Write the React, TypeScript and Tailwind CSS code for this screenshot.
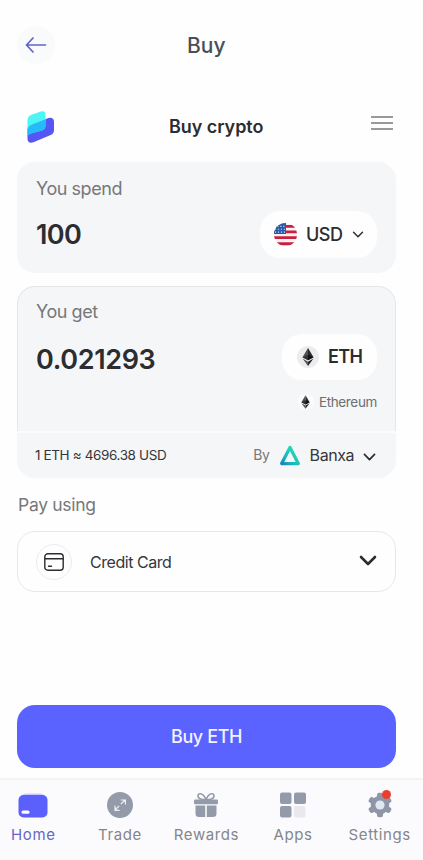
import type { ReactNode } from 'react';

function Chevron({ className, strokeWidth = 1.5 }: { className: string; strokeWidth?: number }) {
  return (
    <svg viewBox="0 0 18 11" className={className} fill="none" stroke="currentColor" strokeWidth={strokeWidth} strokeLinecap="round" strokeLinejoin="round">
      <path d="M2 2l7 7 7-7" />
    </svg>
  );
}

function Logo() {
  return (
    <svg viewBox="0 0 28 32" className="mb-px h-8 w-7">
      <path d="M5 13.500L21.500 7c3-1 5.500.5 5.500 3.500v8.500c0 2.500-1 4-3.300 5L6.500 31.200C3 32.500.5 31 .5 28v-8.500c0-3 1.500-5 4.500-6z" fill="#5656f5" />
      <path d="M5 3.500L14 .6c2.700-.8 4.500.4 4.500 3v10.900c0 2.500-1 4-3.500 4.900L4 22.500c-2 .6-3.500 1.500-3.500 3.500V9.500c0-3 1.500-5 4.500-6z" fill="#4df5f5" />
      <path d="M5 13.500L18.500 8.200v6.300c0 2.500-1 4-3.500 4.900L4 22.500c-2 .6-3.500 1.500-3.500 3.500v-6.500c0-3 1.500-5 4.500-6z" fill="#27baf8" />
    </svg>
  );
}

function Flag() {
  return (
    <svg viewBox="0 0 24 24" className="size-[23px]">
      <defs>
        <clipPath id="flag">
          <circle cx="12" cy="12" r="12" />
        </clipPath>
      </defs>
      <g clipPath="url(#flag)">
        <rect width="24" height="24" fill="#f4f2f5" />
        <path d="M0 3.500h24M0 9.300h24M0 15.300h24M0 21.700h24" stroke="#c9203f" strokeWidth="3" />
        <rect width="12.500" height="11.500" fill="#275ba8" />
        <path d="M3.500 3.500h9M1 6.500h12M1 9.500h12" stroke="#c9dcf5" strokeWidth="1.200" strokeDasharray="1.200 1.900" />
      </g>
    </svg>
  );
}

function Eth({ className }: { className: string }) {
  return (
    <svg viewBox="0 0 12 18" className={className}>
      <path d="M6 0L.5 9.200 6 12.300z" fill="#515154" />
      <path d="M6 0l5.500 9.200L6 12.300z" fill="#29292b" />
      <path d="M.5 9.200L6 6.800v5.500z" fill="#333336" />
      <path d="M11.500 9.200L6 6.800v5.500z" fill="#111113" />
      <path d="M.5 10.500L6 18v-4.300z" fill="#57575a" />
      <path d="M11.500 10.500L6 18v-4.300z" fill="#242426" />
    </svg>
  );
}

function Banxa() {
  return (
    <svg viewBox="0 0 22 21" className="mb-px h-[21px] w-[22px]" fill="none">
      <defs>
        <linearGradient id="banxa" x1="1" y1="20" x2="14" y2="7" gradientUnits="userSpaceOnUse">
          <stop stopColor="#1479bd" />
          <stop offset=".5" stopColor="#19b4c0" />
          <stop offset="1" stopColor="#20d5b5" />
        </linearGradient>
      </defs>
      <path d="M11 2.500L2.700 18.600h16.600z" stroke="url(#banxa)" strokeWidth="3.300" strokeLinejoin="round" />
    </svg>
  );
}

function HomeIcon() {
  return (
    <svg viewBox="0 0 30 26" className="h-[26px] w-[30px]">
      <path d="M4 3.500Q5 1.500 8 1.500h14q3 0 4 2z" fill="#c9caff" />
      <rect x=".5" y="3" width="29" height="22.500" rx="5" fill="#5b5ffc" />
      <rect x="3.500" y="18.500" width="8" height="3.300" rx="1.500" fill="#fff" />
    </svg>
  );
}

function TradeIcon() {
  return (
    <svg viewBox="0 0 26 26" className="size-[26px]" fill="none">
      <circle cx="13" cy="13" r="13" fill="#939baa" />
      <path d="M13.800 12.200L18 8m-4.200 0H18.400v4.600M12.200 13.800L8 18m0-4.600V18.400h4.600" stroke="#eef0f4" strokeWidth="1.200" />
    </svg>
  );
}

function RewardsIcon() {
  return (
    <svg viewBox="0 0 24 26" className="h-[26px] w-6">
      <path d="M12 7.500C8.500 8 4 7 4 4s4.500-4 8 3.500C15.500 0 20 1 20 4s-4.500 4-8 3.500z" fill="none" stroke="#939baa" strokeWidth="1.600" />
      <rect x="0" y="7.500" width="24" height="4.700" rx="1.200" fill="#939baa" />
      <path d="M1.500 13.500h9.700V25H5q-3.500 0-3.500-3.500zM12.800 13.500h9.700v8q0 3.500-3.500 3.500h-6.200z" fill="#939baa" />
    </svg>
  );
}

function AppsIcon() {
  return (
    <svg viewBox="0 0 26 26" className="size-[26px]" fill="#939baa">
      <rect x="0" y=".5" width="11.500" height="11.500" rx="2" />
      <rect x="14" y=".5" width="12" height="11.500" rx="2" />
      <rect x="0" y="14" width="11.500" height="11.500" rx="2" />
      <rect x="14" y="14" width="11.500" height="11.500" rx="2" fill="#e9e9ed" />
    </svg>
  );
}

function SettingsIcon() {
  return (
    <div className="relative">
      <svg viewBox="0 0 24 26" className="h-[26px] w-6">
        <g fill="#8f96a7">
          <circle cx="12" cy="13" r="9.300" />
          <rect x="9" y=".8" width="6" height="24.400" rx="2" />
          <rect x="9" y=".8" width="6" height="24.400" rx="2" transform="rotate(60 12 13)" />
          <rect x="9" y=".8" width="6" height="24.400" rx="2" transform="rotate(120 12 13)" />
        </g>
        <circle cx="12" cy="13" r="4.600" fill="#dfe7f3" />
      </svg>
      <span className="absolute -top-[2px] left-[14px] size-[9px] rounded-full bg-[#e8402f]"></span>
    </div>
  );
}

const tabs: { label: string; icon: ReactNode; active?: boolean }[] = [
  { label: 'Home', icon: <HomeIcon />, active: true },
  { label: 'Trade', icon: <TradeIcon /> },
  { label: 'Rewards', icon: <RewardsIcon /> },
  { label: 'Apps', icon: <AppsIcon /> },
  { label: 'Settings', icon: <SettingsIcon /> },
];

export default function App() {
  return (
    <div className="flex h-[860px] w-[423px] flex-col overflow-hidden bg-[#fefefe] font-['Inter',sans-serif] text-[#2c2d30]">
      <header className="flex h-[92px] items-center pl-[17px]">
        <button className="mb-[3px] flex size-[38px] items-center justify-center rounded-full bg-[#f9fafc] text-[#6262cf]">
          <svg viewBox="0 0 22 16" className="h-4 w-[22px]" fill="none" stroke="currentColor" strokeWidth="1.700" strokeLinecap="round" strokeLinejoin="round">
            <path d="M20.500 8H1.500M8 1L1.500 8 8 15" />
          </svg>
        </button>
        <h1 className="ml-[132px] text-[21px] leading-6 font-medium text-[#465059]">Buy</h1>
      </header>

      <main className="flex flex-col pr-[27px] pl-[17px]">
        <div className="flex h-[70px] items-center pl-[10px]">
          <Logo />
          <h2 className="ml-[114px] text-[18px] leading-6 font-semibold tracking-[-0.05px]">Buy crypto</h2>
          <button className="mr-[3px] mb-2 ml-auto flex w-[22px] flex-col gap-1">
            <span className="h-[2px] bg-[#98999b]"></span>
            <span className="h-[2px] bg-[#98999b]"></span>
            <span className="h-[2px] bg-[#98999b]"></span>
          </button>
        </div>

        <section className="h-[111px] rounded-[18px] bg-[#f5f6f8] pt-[15px] pr-[19px] pl-[19px]">
          <p className="text-[18px] leading-6 tracking-[-0.45px] text-[#77787a]">You spend</p>
          <div className="mt-[10px] flex h-[47px] items-center justify-between">
            <span className="text-[27px] leading-8 font-semibold tracking-[-0.6px]">100</span>
            <button className="flex h-[47px] w-[117px] items-center rounded-[20px] bg-[#fefefe] pl-[14px]">
              <Flag />
              <span className="ml-[9px] text-[18px] leading-6 font-medium tracking-[-0.5px]">USD</span>
              <Chevron className="ml-[10px] h-[7px] w-3" strokeWidth={2.3} />
            </button>
          </div>
        </section>

        <section className="mt-[13px] h-[145px] rounded-t-[18px] border border-b-0 border-[#e4e7e8] bg-[#f5f6f8] pt-[13px] pr-[18px] pl-[18px]">
          <p className="text-[18px] leading-6 tracking-[-0.45px] text-[#77787a]">You get</p>
          <div className="mt-[10px] flex h-[46px] items-center justify-between">
            <span className="pt-[5px] text-[27px] leading-8 font-semibold tracking-[-0.35px]">0.021293</span>
            <button className="flex h-[46px] w-[95px] items-center rounded-[20px] bg-[#fefefe] pl-[15px]">
              <span className="flex size-[22px] items-center justify-center rounded-full bg-[#ececef]">
                <Eth className="h-[18px] w-3" />
              </span>
              <span className="ml-[9px] text-[18px] leading-6 font-semibold tracking-[-0.6px]">ETH</span>
            </button>
          </div>
          <div className="mt-[13px] flex items-center justify-end">
            <span className="flex size-4 items-center justify-center rounded-full bg-[#fbfbfc]">
              <Eth className="h-[14px] w-[9px]" />
            </span>
            <span className="ml-[5px] text-[13.5px] leading-[18px] tracking-[-0.35px] text-[#6d6e70]">Ethereum</span>
          </div>
        </section>
        <section className="flex h-[47px] items-center rounded-b-[18px] border-t-2 border-[#fbfbfc] bg-[#f5f6f8] pr-5 pl-[18px]">
          <span className="mb-px text-[13.5px] leading-5 tracking-[-0.38px] text-[#36373a]">1 ETH ≈ 4696.38 USD</span>
          <span className="mb-px ml-auto text-[14px] leading-5 tracking-[-0.3px] text-[#77787a]">By</span>
          <span className="ml-[9px]">
            <Banxa />
          </span>
          <span className="mb-px ml-[9px] text-[16px] leading-5 tracking-[-0.45px] text-[#36373a]">Banxa</span>
          <Chevron className="mt-[3px] ml-[9px] h-[8px] w-[13px]" strokeWidth={2.4} />
        </section>

        <p className="mt-[15px] ml-px text-[17.5px] leading-6 tracking-[-0.3px] text-[#77787a]">Pay using</p>
        <button className="mt-[14px] flex h-[61px] items-center rounded-[18px] border border-[#e6e7e8] pr-[18px] pl-[18px]">
          <span className="flex size-9 items-center justify-center rounded-full border border-[#ececee]">
            <svg viewBox="0 0 20 18" className="h-[18px] w-5" fill="none" stroke="#2c2d30" strokeWidth="1.400" strokeLinecap="round">
              <rect x=".8" y=".8" width="18.400" height="16.400" rx="3" />
              <path d="M1 5.800h18M4.500 13.300h3" />
            </svg>
          </span>
          <span className="ml-[18px] text-[16px] leading-5 tracking-[-0.45px] text-[#36373a]">Credit Card</span>
          <Chevron className="mb-[2px] ml-auto h-[11px] w-[18px]" strokeWidth={2.6} />
        </button>

        <button className="mt-[113px] h-[63px] rounded-[18px] bg-[#5a62ff] text-[18px] leading-6 font-medium tracking-[-0.4px] text-[#f3f3ff]">
          Buy ETH
        </button>
      </main>

      <nav className="mt-[10px] -ml-[10px] grid flex-1 grid-cols-5 border-t-2 border-[#f3f3f6] bg-[#fbfbfe]">
        {tabs.map((tab) => (
          <a key={tab.label} className={tab.active ? 'flex flex-col items-center pt-3 text-[#6666c8]' : 'flex flex-col items-center pt-3 text-[#85868b]'}>
            {tab.icon}
            <span className="mt-[7px] text-[15px] leading-5 tracking-[0.6px]">{tab.label}</span>
          </a>
        ))}
      </nav>
    </div>
  );
}
